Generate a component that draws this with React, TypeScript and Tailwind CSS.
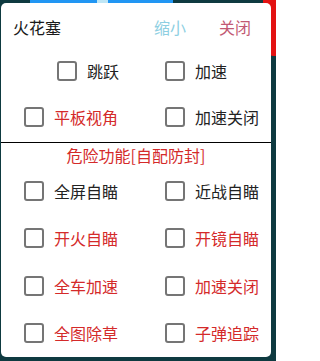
import React from "react";

type Item = { label: string; danger?: boolean };

function Check({ label, danger, className = "" }: Item & { className?: string }) {
  return (
    <label className={`flex items-center gap-[10px] ${className}`}>
      <span className="w-5 h-5 shrink-0 border-[2.5px] border-[#757575] rounded-[3px] bg-white" />
      <span className={`text-[16px] leading-none ${danger ? "text-[#d42a2a]" : "text-[#222]"}`}>{label}</span>
    </label>
  );
}

const dangerRows: [Item, Item][] = [
  [{ label: "全屏自瞄" }, { label: "近战自瞄" }],
  [{ label: "开火自瞄", danger: true }, { label: "开镜自瞄", danger: true }],
  [{ label: "全车加速", danger: true }, { label: "加速关闭", danger: true }],
  [{ label: "全图除草", danger: true }, { label: "子弹追踪", danger: true }],
];

export default function App() {
  return (
    <div
      className="relative w-[276px] h-[361px] bg-[#0e3a40] overflow-hidden"
      style={{ fontFamily: '"Noto Sans CJK SC", "Noto Sans", sans-serif' }}
    >
      {/* background bits peeking out behind the panel */}
      <div className="absolute top-0 left-[30px] w-[143px] h-[4px] bg-[#2196f3]" />
      <div className="absolute top-0 left-[97px] w-[11px] h-[3px] bg-[#bfe6f5]" />
      <div className="absolute top-0 right-0 w-[13px] h-[56px] bg-[#e31212] rounded-bl-[10px]" />

      <div className="relative ml-[1px] mt-[3px] w-[270px] h-[354px] bg-white rounded-[5px] overflow-hidden flex flex-col">
        <div className="h-[48px] flex items-center pl-[12px] pr-[20px] text-[16px] leading-none">
          <span className="text-[#1a1a1a]">火花塞</span>
          <span className="ml-auto text-[#8ecfe2]">缩小</span>
          <span className="ml-[33px] text-[#c25a73]">关闭</span>
        </div>

        <div className="grid grid-cols-[141px_1fr] pl-[23px]">
          <div className="h-[41px] flex items-center">
            <Check label="跳跃" className="ml-[33px]" />
          </div>
          <div className="h-[41px] flex items-center">
            <Check label="加速" />
          </div>
          <div className="h-[51px] flex items-center">
            <Check label="平板视角" danger />
          </div>
          <div className="h-[51px] flex items-center">
            <Check label="加速关闭" />
          </div>
        </div>

        <div className="h-px bg-black" />

        <div className="h-[24px] flex items-center justify-center text-[16px] leading-none text-[#d42a2a]">
          危险功能[自配防封]
        </div>

        <div className="grid grid-cols-[141px_1fr] pl-[23px]">
          {dangerRows.map(([a, b]) => (
            <React.Fragment key={a.label}>
              <div className="h-[47.5px] flex items-center">
                <Check {...a} />
              </div>
              <div className="h-[47.5px] flex items-center">
                <Check {...b} />
              </div>
            </React.Fragment>
          ))}
        </div>
      </div>
    </div>
  );
}
